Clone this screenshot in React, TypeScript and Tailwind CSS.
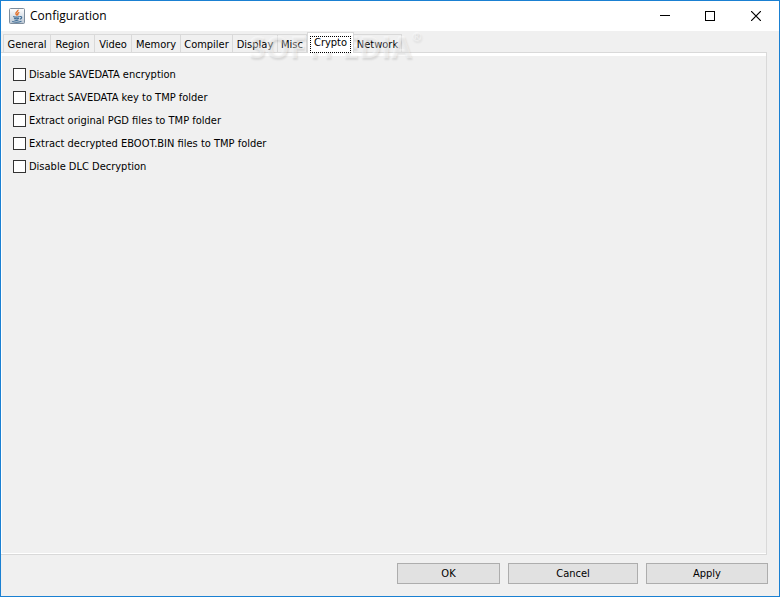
import React from "react";

const tabs = [
    { name: "General", width: "w-[48px]" },
    { name: "Region", width: "w-[44px]" },
    { name: "Video", width: "w-[37px]" },
    { name: "Memory", width: "w-[49px]" },
    { name: "Compiler", width: "w-[52px]" },
    { name: "Display", width: "w-[45px]" },
    { name: "Misc", width: "w-[29px]" },
    { name: "Crypto", width: "w-[47px]" },
    { name: "Network", width: "w-[48px]" },
];

const options = [
    "Disable SAVEDATA encryption",
    "Extract SAVEDATA key to TMP folder",
    "Extract original PGD files to TMP folder",
    "Extract decrypted EBOOT.BIN files to TMP folder",
    "Disable DLC Decryption",
];

const JavaIcon: React.FC = () => (
    <svg width="16" height="16" viewBox="0 0 16 16" fill="none">
        <defs>
            <linearGradient id="tile" x1="0" y1="0" x2="0" y2="1">
                <stop offset="0" stopColor="#ffffff" />
                <stop offset="1" stopColor="#b9c6d3" />
            </linearGradient>
        </defs>
        <rect x="0.5" y="0.5" width="15" height="15" rx="1" fill="url(#tile)" stroke="#7e8d9c" />
        <path d="M9 1.800c.6 1.800-3 2.400-2 4.300.2.500.7.900.9 1.400M10.300 4.300c-1.500.7-2.200 1.400-1.200 3" stroke="#e2702a" strokeWidth="1.400" />
        <path d="M4.200 8.500c1.700.7 4.800.6 6.500 0M5 10.300c1.400.5 3.700.5 5 0M5.400 12c1.200.4 2.900.4 4.100 0M3.200 13.500c2.600.8 6.800.7 9.300-.2M11 8.600c2.400-.6 2.300 1.800-.2 2.600" stroke="#3f6d96" strokeWidth="1.100" />
    </svg>
);

const TitleBar: React.FC = () => (
    <header className="flex h-[30px] items-center justify-between bg-white pl-2">
        <div className="flex items-center gap-[5px]">
            <JavaIcon />
            <h1 className="font-['Open_Sans',sans-serif] text-[12px] leading-4">Configuration</h1>
        </div>
        <div className="flex h-full">
            <button aria-label="Minimize" className="flex w-[45px] items-center justify-center">
                <svg width="10" height="10" shapeRendering="crispEdges"><path d="M0 4.500h10" stroke="black" /></svg>
            </button>
            <button aria-label="Maximize" className="flex w-[46px] items-center justify-center">
                <svg width="10" height="10" shapeRendering="crispEdges"><rect x="0.500" y="0.500" width="9" height="9" fill="none" stroke="black" /></svg>
            </button>
            <button aria-label="Close" className="flex w-[46px] items-center justify-center">
                <svg width="10" height="10"><path d="M0 0l10 10M10 0L0 10" stroke="black" strokeWidth="1.200" /></svg>
            </button>
        </div>
    </header>
);

const TabBar: React.FC = () => (
    <div role="tablist" className="relative flex h-[21px] items-end pl-0.5">
        {tabs.map((tab, i) =>
            tab.name === "Crypto" ? (
                <button key={tab.name} role="tab" aria-selected="true" className={`${tab.width} relative z-30 -mb-px h-[21px] shrink-0 border-x border-t border-[#d9d9d9] bg-white px-0.5 pt-0.5`}>
                    <span className="flex h-[17px] items-center justify-center border border-dotted border-black pb-0.5">{tab.name}</span>
                </button>
            ) : (
                <button key={tab.name} role="tab" aria-selected="false" className={`${tab.width} ${i === 0 ? "border-l" : ""} h-[18px] shrink-0 border-r border-t border-[#d9d9d9] whitespace-nowrap leading-[20px]`}>
                    {tab.name}
                </button>
            )
        )}
        <div className="pointer-events-none absolute top-0 left-[248px] z-20 flex font-['Open_Sans',sans-serif] font-bold text-white/40 [text-shadow:1px_2px_2px_rgba(0,0,0,0.1)]">
            <span className="text-[30px] leading-8">SOFTPEDIA</span>
            <span className="text-[12px] leading-3">®</span>
        </div>
    </div>
);

const App: React.FC = () => {
    return (
        <div className="flex min-h-screen flex-col border border-[#1a80d2] bg-[#f0f0f0] font-['DejaVu_Sans_Condensed','DejaVu_Sans',sans-serif] text-[11px] text-black">
            <TitleBar />
            <main className="flex grow flex-col pr-3">
                <TabBar />
                <div role="tabpanel" className="flex grow flex-col border border-l-0 border-[#d9d9d9]">
                    <div className="grow border-t-[3px] border-b border-l border-white pt-[10px] pl-[11px]">
                        <div className="flex flex-col gap-[7px]">
                            {options.map((option) => (
                                <label key={option} className="flex h-4 items-center gap-[3px]">
                                    <input type="checkbox" className="size-[13px] appearance-none border border-[#333333] bg-white checked:bg-[#333333]" />
                                    <span className="pt-0.5 leading-4">{option}</span>
                                </label>
                            ))}
                        </div>
                    </div>
                </div>
            </main>
            <footer className="flex justify-end gap-2 pt-2 pr-[11px] pb-3">
                <button className="h-[21px] w-[103px] border border-[#adadad] bg-[#e1e1e1] pt-0.5">OK</button>
                <button className="h-[21px] w-[130px] border border-[#adadad] bg-[#e1e1e1] pt-0.5">Cancel</button>
                <button className="h-[21px] w-[122px] border border-[#adadad] bg-[#e1e1e1] pt-0.5">Apply</button>
            </footer>
        </div>
    );
};

export default App;
